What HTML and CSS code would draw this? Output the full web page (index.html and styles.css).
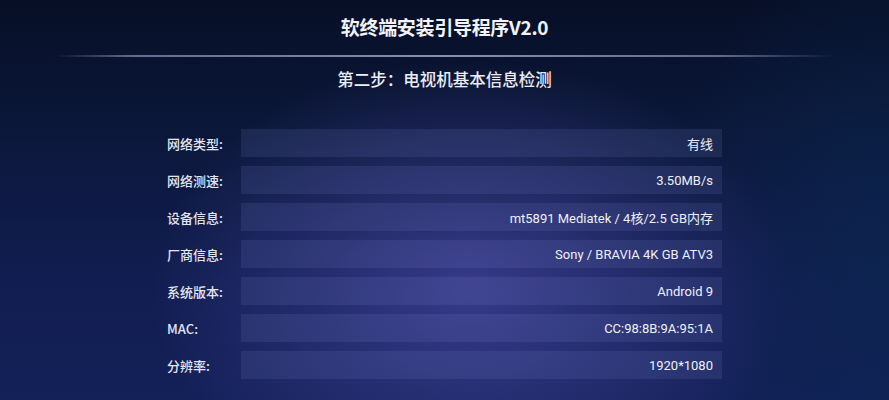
FILE: index.html
```html
<!DOCTYPE html>
<html lang="zh-CN">
<head>
<meta charset="utf-8">
<title>软终端安装引导程序V2.0</title>
<link rel="stylesheet" href="styles.css">
</head>
<body>
<div class="screen">
  <h1 class="title">软终端安装引导程序V2.0</h1>
  <div class="divider"></div>
  <h2 class="subtitle">第二步：电视机基本信息检测</h2>
  <div class="rows">
    <div class="row"><span class="label">网络类型:</span><span class="bar">有线</span></div>
    <div class="row"><span class="label">网络测速:</span><span class="bar">3.50MB/s</span></div>
    <div class="row"><span class="label">设备信息:</span><span class="bar">mt5891 Mediatek / 4核/2.5 GB内存</span></div>
    <div class="row"><span class="label">厂商信息:</span><span class="bar">Sony / BRAVIA 4K GB ATV3</span></div>
    <div class="row"><span class="label">系统版本:</span><span class="bar">Android 9</span></div>
    <div class="row"><span class="label">MAC:</span><span class="bar">CC:98:8B:9A:95:1A</span></div>
    <div class="row"><span class="label">分辨率:</span><span class="bar">1920*1080</span></div>
  </div>
</div>
</body>
</html>
```
FILE: styles.css
```css
html, body {
  margin: 0;
  padding: 0;
}
body {
  width: 889px;
  height: 400px;
  overflow: hidden;
  font-family: Roboto, "Noto Sans CJK SC", sans-serif;
  color: #e9ebf3;
  background:
    radial-gradient(ellipse 320px 230px at 470px 290px, rgba(72, 70, 160, 0.7), rgba(60, 60, 150, 0) 100%),
    radial-gradient(ellipse 220px 320px at 889px 250px, rgba(10, 40, 80, 0.6), rgba(10, 40, 80, 0) 100%),
    linear-gradient(180deg, #070f26 0%, #0b1738 30%, #111d50 70%, #132158 100%);
}
.screen {
  display: flex;
  flex-direction: column;
  align-items: center;
  padding-top: 15px;
}
.title {
  margin: 0;
  font-family: "Noto Sans CJK SC", sans-serif;
  font-size: 19px;
  line-height: 24px;
  font-weight: 700;
  color: #f3f4f8;
  letter-spacing: -0.3px;
}
.divider {
  margin-top: 16px;
  width: 780px;
  height: 2px;
  background: linear-gradient(90deg, rgba(140, 145, 185, 0) 0%, rgba(140, 145, 185, 0.7) 10%, rgba(160, 165, 200, 0.85) 50%, rgba(140, 145, 185, 0.7) 85%, rgba(140, 145, 185, 0) 100%);
}
.subtitle {
  margin: 11px 0 0;
  font-family: "Noto Sans CJK SC", sans-serif;
  font-size: 16.5px;
  line-height: 22px;
  font-weight: 500;
  color: #eceef5;
}
.rows {
  margin-top: 39px;
  display: flex;
  flex-direction: column;
  gap: 9px;
  width: 889px;
}
.row {
  display: flex;
  align-items: center;
  height: 28px;
  padding-left: 167px;
}
.label {
  width: 74px;
  font-family: "Noto Sans CJK SC", sans-serif;
  font-size: 13px;
  font-weight: 500;
  color: #e3e6f0;
}
.bar {
  width: 481px;
  height: 28px;
  box-sizing: border-box;
  padding-right: 9px;
  display: flex;
  align-items: center;
  justify-content: flex-end;
  font-family: Roboto, "Noto Sans CJK SC", sans-serif;
  font-size: 13px;
  color: #eef0f6;
  background: rgba(130, 140, 210, 0.14);
}
```
